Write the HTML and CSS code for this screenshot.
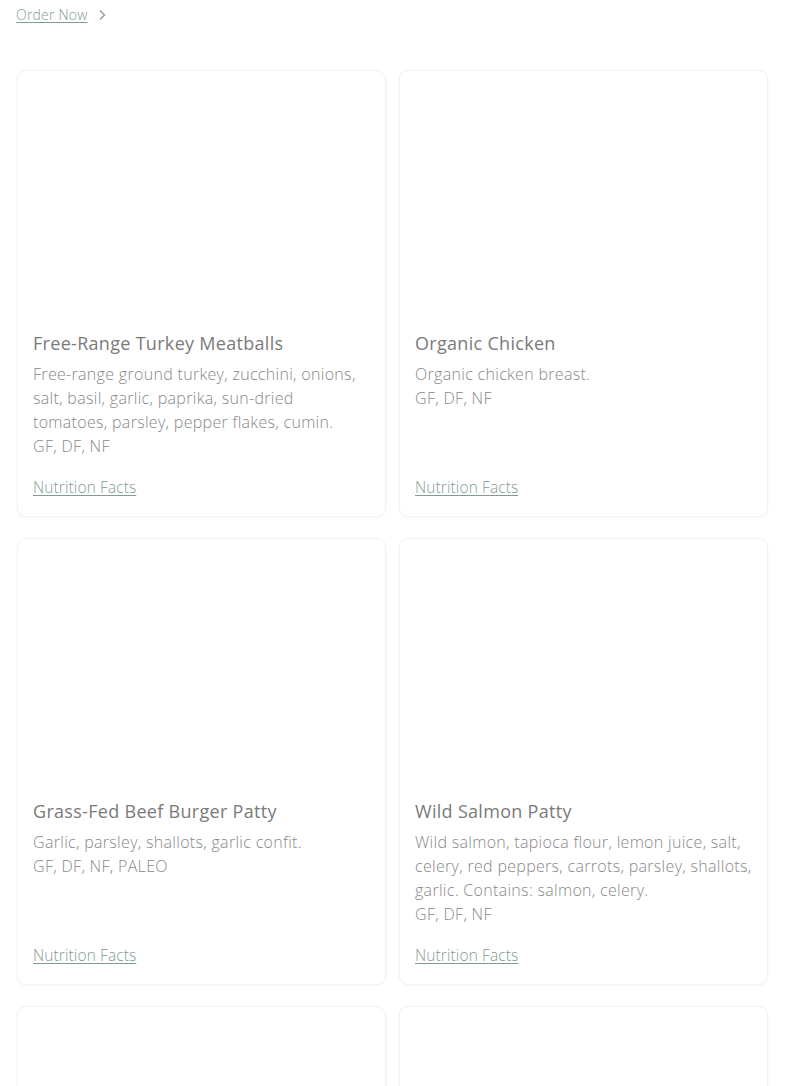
FILE: index.html
```html
<!DOCTYPE html>
<html lang="en">
<head>
<meta charset="utf-8">
<title>Menu</title>
<link rel="stylesheet" href="styles.css">
</head>
<body>
<div class="page">
  <a class="order" href="#">Order Now</a>
  <svg class="chev" width="8" height="12" viewBox="0 0 8 12"><path d="M2 1.5 L6.5 6 L2 10.5" fill="none" stroke="#999" stroke-width="1.4"/></svg>
  <div class="grid">
    <div class="card">
      <div class="img"></div>
      <div class="body">
        <h3 class="title">Free-Range Turkey Meatballs</h3>
        <p class="desc">Free-range ground turkey, zucchini, onions, salt, basil, garlic, paprika, sun-dried tomatoes, parsley, pepper flakes, cumin.<br>GF, DF, NF</p>
        <a class="facts" href="#">Nutrition Facts</a>
      </div>
    </div>
    <div class="card">
      <div class="img"></div>
      <div class="body">
        <h3 class="title">Organic Chicken</h3>
        <p class="desc">Organic chicken breast.<br>GF, DF, NF</p>
        <a class="facts" href="#">Nutrition Facts</a>
      </div>
    </div>
    <div class="card">
      <div class="img"></div>
      <div class="body">
        <h3 class="title">Grass-Fed Beef Burger Patty</h3>
        <p class="desc">Garlic, parsley, shallots, garlic confit.<br>GF, DF, NF, PALEO</p>
        <a class="facts" href="#">Nutrition Facts</a>
      </div>
    </div>
    <div class="card">
      <div class="img"></div>
      <div class="body">
        <h3 class="title">Wild Salmon Patty</h3>
        <p class="desc">Wild salmon, tapioca flour, lemon juice, salt, celery, red peppers, carrots, parsley, shallots, garlic. Contains: salmon, celery.<br>GF, DF, NF</p>
        <a class="facts" href="#">Nutrition Facts</a>
      </div>
    </div>
    <div class="card">
      <div class="img"></div>
      <div class="body"></div>
    </div>
    <div class="card">
      <div class="img"></div>
      <div class="body"></div>
    </div>
  </div>
</div>
</body>
</html>
```
FILE: styles.css
```css
html, body {
  margin: 0;
  padding: 0;
  background: #fff;
}
body {
  font-family: "Open Sans", "Liberation Sans", sans-serif;
  font-weight: 300;
  color: #888;
}
.page {
  padding: 3px 17px 0 16px;
}
.order {
  font-size: 14px;
  line-height: 20px;
  letter-spacing: 0.2px;
  color: #7f9c90;
  text-decoration: underline;
  text-underline-offset: 2px;
}
.chev {
  margin-left: 6px;
  vertical-align: -1px;
}
.grid {
  display: grid;
  grid-template-columns: 1fr 1fr;
  column-gap: 13px;
  row-gap: 21px;
  margin-top: 45px;
  padding-left: 1px;
}
.card {
  display: flex;
  flex-direction: column;
  border: 1px solid #f2f2f2;
  border-radius: 9px;
  box-shadow: 0 1px 3px rgba(0,0,0,0.035);
  background: #fff;
  min-height: 444px;
}
.img {
  height: 248px;
}
.body {
  flex: 1;
  display: flex;
  flex-direction: column;
  padding: 11px 15px 17px 15px;
}
.title {
  margin: 0 0 6px;
  font-size: 18px;
  line-height: 26px;
  font-weight: 400;
  letter-spacing: 0.3px;
  color: #7a7a7a;
}
.desc {
  margin: 0 0 17px;
  font-size: 16px;
  line-height: 24px;
  letter-spacing: 0.31px;
  color: #888;
}
.facts {
  margin-top: auto;
  font-size: 15.5px;
  line-height: 24px;
  letter-spacing: 0.1px;
  color: #7f9c90;
  text-decoration: underline;
  text-underline-offset: 2px;
  align-self: flex-start;
}
```
